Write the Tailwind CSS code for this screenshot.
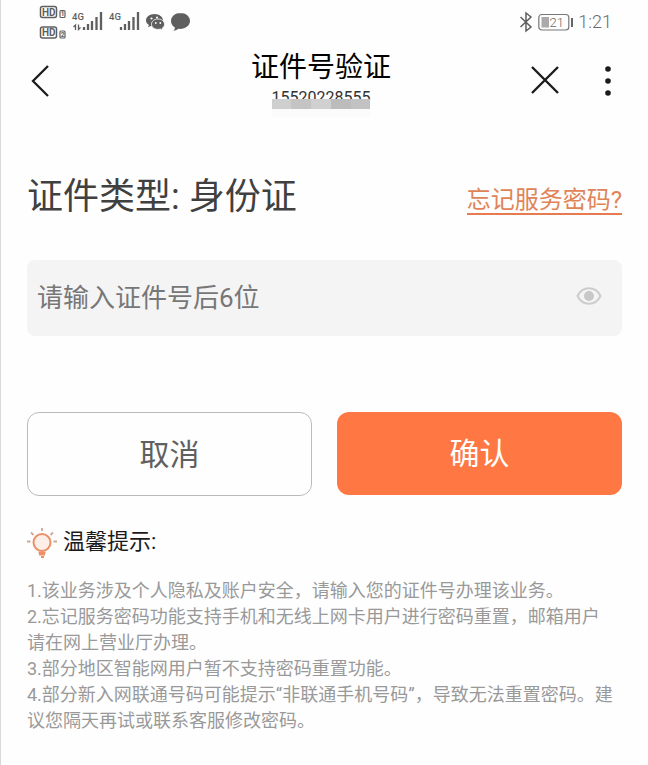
<!DOCTYPE html>
<html lang="zh-CN">
    <head>
        <meta charset="UTF-8" />
        <meta name="viewport" content="width=device-width, initial-scale=1.0" />
        <script src="https://cdn.jsdelivr.net/npm/@tailwindcss/browser@4"></script>
        <title>证件号验证</title>
    </head>
    <body
        class="min-h-screen bg-[#fefefe] border-l border-[#d8d8d8] font-[Roboto,'Noto_Sans_CJK_SC',sans-serif] text-[#404040]"
    >
        <!-- status bar -->
        <div class="h-11 pl-[37px] pr-9 flex items-center justify-between">
            <svg class="w-[154px] h-9" viewBox="38 5 154 36" fill="none" aria-hidden="true">
                <g stroke="#5f5f5f" stroke-width="1.5">
                    <rect x="40.5" y="7.5" width="16" height="11" rx="2" />
                    <rect x="40.5" y="28" width="16" height="11" rx="2" />
                    <rect x="60" y="11.5" width="5" height="7" rx="1" stroke-width="1.2" />
                    <rect x="60" y="32" width="5" height="7" rx="1" stroke-width="1.2" />
                </g>
                <g fill="#5f5f5f" font-weight="700">
                    <text x="42" y="16.5" font-size="10">HD</text>
                    <text x="42" y="37" font-size="10">HD</text>
                    <text x="60.8" y="17.3" font-size="6.5">1</text>
                    <text x="60.8" y="37.8" font-size="6.5">2</text>
                </g>
                <g fill="#5f5f5f" font-size="9.5" font-weight="500">
                    <text x="72" y="21">4G</text>
                    <text x="109" y="21">4G</text>
                </g>
                <path d="M75.500 31v-5l-2 2M78.500 25.500v5l2-2" stroke="#5f5f5f" stroke-width="1.3" />
                <path d="M84 31v-3M88 31v-6M92 31v-9M96.500 31v-13M101 31v-18" stroke="#5f5f5f" stroke-width="2.300" />
                <path d="M121 31v-3M125 31v-6M129 31v-9M133.500 31v-13M138 31v-18" stroke="#5f5f5f" stroke-width="2.300" />
                <!-- wechat -->
                <path d="M154.500 15c-4.800 0-8.500 3-8.500 6.300 0 2 1.100 3.700 2.900 4.800l-.8 2.200 2.800-1.400c1 .3 2.200.5 3.600.5 4.700 0 8.500-2.700 8.500-6.100 0-3.300-3.800-6.300-8.500-6.300z" fill="#5f5f5f" />
                <path d="M158 20c-3.800 0-6.500 2.300-6.500 5.200s2.700 5.200 6.500 5.200c.9 0 1.700-.1 2.400-.3l2.300 1.200-.6-1.900c1.500-1 2.400-2.500 2.400-4.200 0-2.900-2.700-5.200-6.500-5.200z" fill="#5f5f5f" stroke="#fefefe" stroke-width=".8" />
                <g fill="#fefefe">
                    <circle cx="151.500" cy="19.500" r="1.100" />
                    <circle cx="157" cy="18.500" r="1" />
                    <circle cx="155.800" cy="24" r=".9" />
                    <circle cx="160.300" cy="24" r=".9" />
                </g>
                <path d="M180.500 14c-5.300 0-9.500 3.500-9.500 8 0 2.700 1.500 5 3.900 6.400 0 1.500-.7 2.600-1.600 3.300 2.300 0 3.900-.8 5-1.900 6.500.8 11.700-3 11.700-7.800 0-4.500-4.200-8-9.500-8z" fill="#5f5f5f" />
            </svg>
            <div class="flex items-center gap-1 text-[#6a6a6a]">
                <svg class="w-4 h-6" viewBox="0 0 16 24" fill="none" stroke="#5f5f5f" stroke-width="1.5" aria-hidden="true">
                    <path d="M2.500 7 13 17l-5 4V3l5 4L2.500 17" />
                </svg>
                <svg class="w-9 h-5" viewBox="0 0 36 20" fill="none" aria-hidden="true">
                    <rect x=".8" y="2.500" width="30" height="15.500" rx="3" stroke="#777" stroke-width="1.200" />
                    <rect x="3.500" y="5" width="7.500" height="10.500" fill="#aaa" />
                    <path d="M34 6v9" stroke="#666" stroke-width="2" />
                    <text x="11.500" y="15" font-size="13" font-weight="300" fill="#6a6a6a">21</text>
                </svg>
                <span class="text-[18px] leading-6 font-light">1:21</span>
            </div>
        </div>

        <!-- title bar -->
        <header class="h-[76px] pl-5 pr-[27px] grid grid-cols-[1fr_auto_1fr] items-start text-[#1c1c1c]">
            <button type="button" aria-label="返回" class="mt-5 ml-2 w-6 h-9">
                <svg class="w-6 h-9" viewBox="0 0 24 36" fill="none" stroke="currentColor" stroke-width="2.300">
                    <path d="M19 2 4 17l15 15" />
                </svg>
            </button>
            <div class="pt-1.5 flex flex-col items-center">
                <h1 class="text-[28px] leading-9 text-black">证件号验证</h1>
                <div class="relative h-8">
                    <p class="text-[16px] leading-6 text-[#333]">15520228555</p>
                    <div class="absolute inset-x-0 top-[13px] h-2.5 flex">
                        <span class="flex-1 bg-[#cfcfcf]"></span>
                        <span class="flex-1 bg-[#c4c4c4]"></span>
                        <span class="flex-1 bg-[#d0d0d0]"></span>
                        <span class="flex-1 bg-[#bcbcbc]"></span>
                        <span class="flex-1 bg-[#c2c2c2]"></span>
                    </div>
                    <div class="absolute inset-x-0 top-[23px] h-2 bg-[#fbfbfb]"></div>
                </div>
            </div>
            <div class="pt-[18px] flex justify-end gap-9">
                <button type="button" aria-label="关闭">
                    <svg class="w-8 h-8" viewBox="0 0 32 32" fill="none" stroke="currentColor" stroke-width="2.400">
                        <path d="m3 3 26 26M29 3 3 29" />
                    </svg>
                </button>
                <button type="button" aria-label="更多">
                    <svg class="w-6 h-9" viewBox="0 0 24 36" fill="currentColor">
                        <circle cx="11" cy="7" r="2.800" />
                        <circle cx="11" cy="19" r="2.800" />
                        <circle cx="11" cy="31" r="2.800" />
                    </svg>
                </button>
            </div>
        </header>

        <main class="px-[26px] pt-[50px]">
            <div class="flex items-center justify-between">
                <h2 class="text-[36px] leading-[54px]">证件类型: 身份证</h2>
                <a href="#" class="mt-2 text-[24px] leading-[26px] text-[#e08458] border-b-2 border-[#e87a50]">忘记服务密码?</a>
            </div>

            <form>
                <div class="mt-9 h-[76px] pl-2.5 pr-5 flex items-center rounded-lg bg-[#f4f4f4]">
                    <input
                        type="password"
                        aria-label="证件号后6位"
                        placeholder="请输入证件号后6位"
                        class="flex-1 min-w-0 h-full text-[26px] outline-none placeholder:text-[#777]"
                    />
                    <button type="button" aria-label="显示" class="shrink-0 mb-1">
                        <svg class="w-[26px] h-5" viewBox="0 0 26 20" fill="none">
                            <path d="M1.500 10C6.500-.2 19.500-.2 24.500 10 19.500 20.200 6.500 20.200 1.500 10z" stroke="#ccc" stroke-width="2" />
                            <circle cx="13" cy="10" r="5" fill="#c8c8c8" />
                        </svg>
                    </button>
                </div>

                <div class="mt-[76px] grid grid-cols-2 gap-[25px] items-start text-[30px]">
                    <button type="button" class="h-[84px] rounded-xl border border-[#bbb] text-[#606060]">取消</button>
                    <button type="submit" class="h-[83px] rounded-xl bg-[#ff7843] text-white">确认</button>
                </div>
            </form>

            <section class="mt-7">
                <h3 class="flex items-center gap-1 text-[22px] leading-9 text-[#1a1a1a]">
                    <svg class="w-8 h-9" viewBox="0 0 32 36" fill="none" aria-hidden="true">
                        <circle cx="15" cy="18.500" r="8.500" fill="#fdeee7" stroke="#eb9068" stroke-width="2" />
                        <path d="M11.500 28.500h7M12 30.500h6M14 33h3" stroke="#eb9068" stroke-width="1.800" />
                        <path d="M15 4v3M4 8.500l2.500 2.500M26 8.500 23.500 11M0 17.500h3.500M26.500 17.500H30" stroke="#d0a898" stroke-width="1.800" />
                    </svg>
                    温馨提示:
                </h3>
                <div class="mt-[18px] pb-7 text-[18px] leading-[26px] text-[#999]">
                    <p>1.该业务涉及个人隐私及账户安全，请输入您的证件号办理该业务。</p>
                    <p>2.忘记服务密码功能支持手机和无线上网卡用户进行密码重置，邮箱用户<br />请在网上营业厅办理。</p>
                    <p>3.部分地区智能网用户暂不支持密码重置功能。</p>
                    <p>4.部分新入网联通号码可能提示“非联通手机号码”，导致无法重置密码。建<br />议您隔天再试或联系客服修改密码。</p>
                </div>
            </section>
        </main>
    </body>
</html>
